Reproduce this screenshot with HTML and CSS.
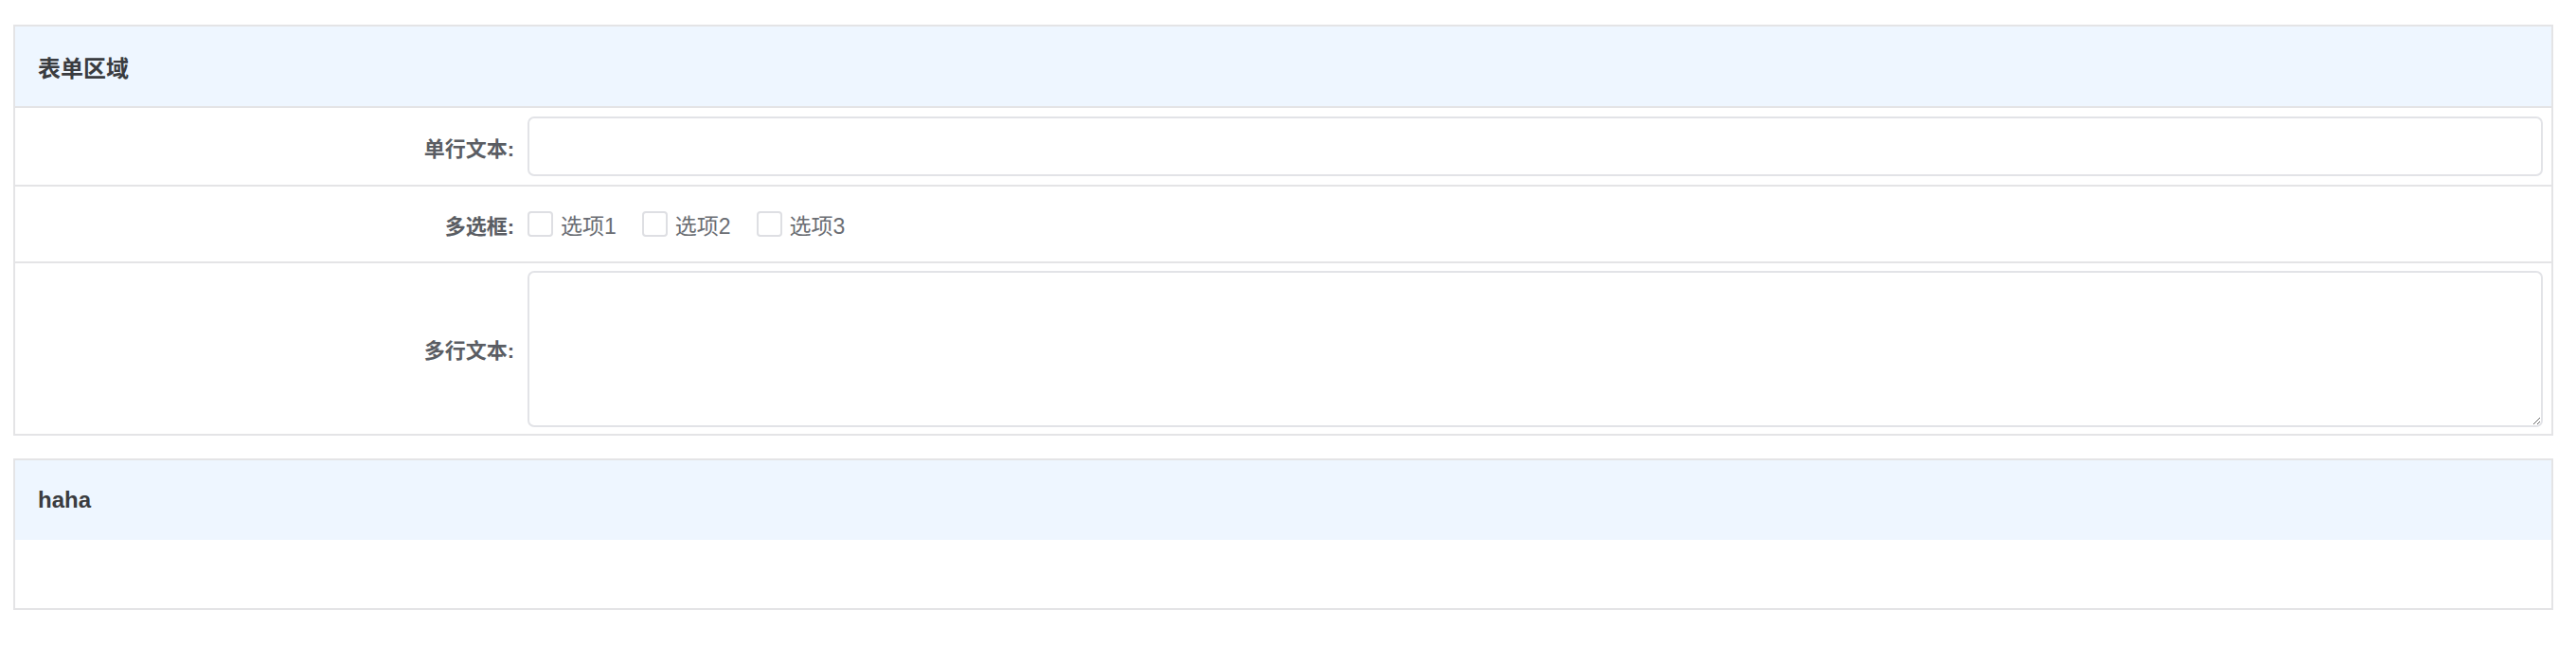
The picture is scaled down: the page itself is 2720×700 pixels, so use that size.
FILE: index.html
```html
<!DOCTYPE html>
<html lang="zh-CN">
<head>
<meta charset="utf-8">
<title>表单区域</title>
<link rel="stylesheet" href="styles.css">
</head>
<body>
<div class="page">
  <section class="panel">
    <div class="panel-header">表单区域</div>
    <div class="row">
      <div class="label">单行文本:</div>
      <div class="field"><input class="text-input" type="text"></div>
    </div>
    <div class="row">
      <div class="label">多选框:</div>
      <div class="field checks">
        <label class="check"><span class="box"></span><span class="check-text">选项1</span></label>
        <label class="check"><span class="box"></span><span class="check-text">选项2</span></label>
        <label class="check"><span class="box"></span><span class="check-text">选项3</span></label>
      </div>
    </div>
    <div class="row row-tall">
      <div class="label">多行文本:</div>
      <div class="field"><textarea class="text-area"></textarea></div>
    </div>
  </section>
  <section class="panel">
    <div class="panel-header plain">haha</div>
    <div class="panel-body"></div>
  </section>
</div>
</body>
</html>
```
FILE: styles.css
```css
html, body {
  margin: 0;
  padding: 0;
  background: #ffffff;
}
body {
  font-family: "Liberation Sans", "Noto Sans CJK SC", sans-serif;
  color: #303133;
}
.page {
  padding: 26px 24px 0 14px;
  display: flex;
  flex-direction: column;
  gap: 24px;
}
.panel {
  border: 2px solid #e4e4e6;
  background: #ffffff;
}
.panel-header {
  height: 84px;
  display: flex;
  align-items: center;
  padding-left: 24px;
  background: #eef6ff;
  font-size: 24px;
  font-weight: bold;
  color: #3a3c40;
}
.panel-body {
  height: 72px;
}
.row {
  display: grid;
  grid-template-columns: 541px 1fr;
  align-items: center;
  border-top: 2px solid #e4e4e6;
  min-height: 81px;
  box-sizing: border-box;
}
.label {
  text-align: right;
  padding-right: 14px;
  font-size: 22px;
  font-weight: bold;
  color: #5a5d63;
}
.field {
  padding: 9px 9px 9px 0;
}
.text-input {
  display: block;
  width: 100%;
  height: 63px;
  box-sizing: border-box;
  border: 2px solid #e2e3e7;
  border-radius: 7px;
  background: #fff;
  outline: none;
}
.row-tall .field {
  padding: 8px 9px 7px 0;
}
.text-area {
  display: block;
  width: 100%;
  height: 165px;
  box-sizing: border-box;
  border: 2px solid #e2e3e7;
  border-radius: 7px;
  background: #fff;
  outline: none;
  resize: vertical;
}
.checks {
  display: flex;
  align-items: center;
  gap: 27px;
}
.check {
  display: flex;
  align-items: center;
  gap: 8px;
}
.box {
  width: 27px;
  height: 27px;
  box-sizing: border-box;
  border: 2px solid #dedfe3;
  border-radius: 4px;
  background: #fff;
}
.check-text {
  font-size: 23px;
  color: #6a6d73;
}
```
